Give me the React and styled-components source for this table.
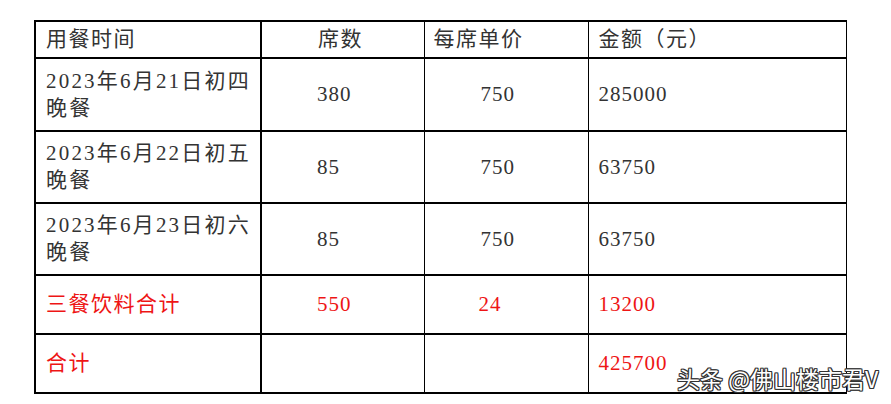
import React from "react";
import styled, { createGlobalStyle } from "styled-components";

const GlobalStyle = createGlobalStyle`
  body {
    margin: 0;
    background: #ffffff;
  }
`

const Page = styled.div`
  position: relative;
  width: 891px;
  height: 404px;
  padding: 20px 0 0 34px;
  box-sizing: border-box;
  background: #ffffff;
  font-family: "Liberation Serif", "Noto Sans CJK SC", serif;
`

const Table = styled.table`
  border-collapse: collapse;
  table-layout: fixed;
  width: 811px;
  color: #333333;
  font-size: 21px;
`

const Row = styled.tr`
  height: ${(props) => props.height}px;
`

const Cell = styled.td`
  padding: 0 0 0 ${(props) => props.indent}px;
  border-top: 2px solid #000;
  border-bottom: 2px solid #000;
  border-left: ${(props) => (props.thick ? 2 : 1)}px solid #000;
  border-right: 1px solid #000;
  vertical-align: middle;
  text-align: left;
  line-height: 27px;
  letter-spacing: ${(props) => (props.cjk ? 1.5 : 1)}px;
  color: ${(props) => (props.red ? "#ee1515" : "#333333")};
  white-space: nowrap;
  box-sizing: border-box;
`

const DateLine = styled.div`
  letter-spacing: 2.2px;
`

const Watermark = styled.div`
  position: absolute;
  left: 677px;
  top: 363px;
  font-family: "Noto Sans CJK SC", "Noto Sans", sans-serif;
  font-size: 23px;
  line-height: 30px;
  color: #ffffff;
  white-space: nowrap;
  text-shadow:
    1px 0 0 #333, -1px 0 0 #333, 0 1px 0 #333, 0 -1px 0 #333,
    1px 1px 0 #333, -1px -1px 0 #333, 1px -1px 0 #333, -1px 1px 0 #333;
`

const meals = [
  { date: "2023年6月21日初四", seats: "380", price: "750", amount: "285000" },
  { date: "2023年6月22日初五", seats: "85", price: "750", amount: "63750" },
  { date: "2023年6月23日初六", seats: "85", price: "750", amount: "63750" },
];

const App = () => {
  return (
    <Page>
      <GlobalStyle />
      <Table>
        <colgroup>
          <col style={{ width: 226 }} />
          <col style={{ width: 163 }} />
          <col style={{ width: 164 }} />
          <col style={{ width: 258 }} />
        </colgroup>
        <tbody>
          <Row height={37}>
            <Cell thick cjk indent={10}>用餐时间</Cell>
            <Cell thick cjk indent={56}>席数</Cell>
            <Cell cjk indent={9}>每席单价</Cell>
            <Cell cjk indent={10}>金额（元）</Cell>
          </Row>
          {meals.map((meal, i) => (
            <Row key={meal.date} height={i === 0 ? 73 : 72}>
              <Cell thick cjk indent={10}>
                <DateLine>{meal.date}</DateLine>
                <DateLine>晚餐</DateLine>
              </Cell>
              <Cell thick indent={55}>{meal.seats}</Cell>
              <Cell indent={56}>{meal.price}</Cell>
              <Cell indent={10}>{meal.amount}</Cell>
            </Row>
          ))}
          <Row height={59}>
            <Cell thick cjk red indent={10}>三餐饮料合计</Cell>
            <Cell thick red indent={55}>550</Cell>
            <Cell red indent={54}>24</Cell>
            <Cell red indent={10}>13200</Cell>
          </Row>
          <Row height={59}>
            <Cell thick cjk red indent={10}>合计</Cell>
            <Cell thick indent={55}></Cell>
            <Cell indent={56}></Cell>
            <Cell red indent={10}>425700</Cell>
          </Row>
        </tbody>
      </Table>
      <Watermark>头条 @佛山楼市君V</Watermark>
    </Page>
  );
}

export default App;
